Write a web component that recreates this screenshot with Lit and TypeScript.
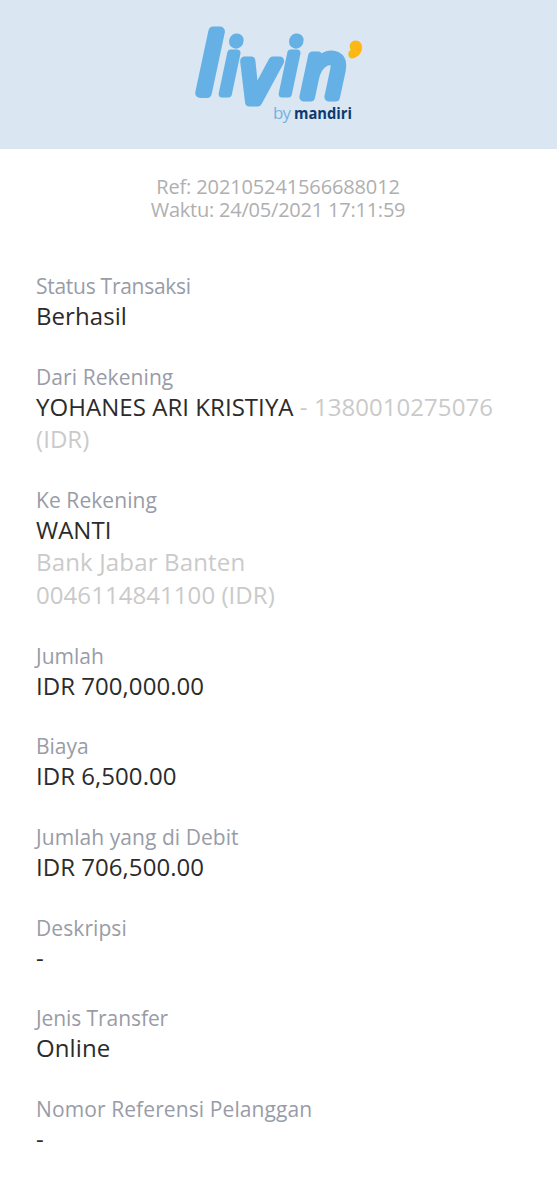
import { LitElement, html, css } from "lit";
import { customElement } from "lit/decorators.js";
import { styleMap } from "lit/directives/style-map.js";

interface Line { text?: string; muted?: string; spacing?: number }
interface Row { label: string; spacing?: number; lines: Line[] }

const rows: Row[] = [
  { label: "Status Transaksi", spacing: -0.27, lines: [{ text: "Berhasil", spacing: 0.06 }] },
  { label: "Dari Rekening", spacing: 0.08, lines: [{ text: "YOHANES ARI KRISTIYA", muted: " - 1380010275076 (IDR)", spacing: 0.05 }] },
  { label: "Ke Rekening", spacing: 0.08, lines: [{ text: "WANTI" }, { muted: "Bank Jabar Banten", spacing: 0.16 }, { muted: "0046114841100 (IDR)", spacing: 0.06 }] },
  { label: "Jumlah", lines: [{ text: "IDR 700,000.00", spacing: 0.04 }] },
  { label: "Biaya", lines: [{ text: "IDR 6,500.00", spacing: 0.04 }] },
  { label: "Jumlah yang di Debit", spacing: 0.06, lines: [{ text: "IDR 706,500.00", spacing: 0.04 }] },
  { label: "Deskripsi", spacing: 0.08, lines: [{ text: "-" }] },
  { label: "Jenis Transfer", spacing: -0.08, lines: [{ text: "Online", spacing: 0.1 }] },
  { label: "Nomor Referensi Pelanggan", spacing: 0.1, lines: [{ text: "-" }] },
];

const tracking = (px = 0) => styleMap({ letterSpacing: `${px}px` });

@customElement("app-root")
export class AppRoot extends LitElement {
  static styles = css`
    :host { display: block; min-height: 1200px; background: #fff; font-family: "Open Sans", "Noto Sans", sans-serif; }
    .banner { height: 149px; background: #dae7f2; display: flex; justify-content: center; }
    .logo { display: block; width: 557px; height: 149px; }
    .script { font-family: "Open Sans", sans-serif; font-style: italic; font-weight: 400; font-size: 76px; fill: #65b1e6; stroke: #65b1e6; stroke-width: 7; stroke-linejoin: round; stroke-linecap: round; }
    .ascender { font-size: 81px; stroke-width: 10; }
    .wide { font-size: 76px; stroke-width: 9; }
    .tick { font-family: "Liberation Serif", serif; font-style: italic; font-weight: 400; font-size: 42px; fill: #fdb813; stroke: #fdb813; stroke-width: 7; stroke-linejoin: round; }
    .by { font: 400 17px "Open Sans", sans-serif; fill: #75b2e1; }
    .brand { font: 700 16.5px "Open Sans", sans-serif; fill: #0c3a70; }
    .meta { padding: 25.5px 1px 0 0; text-align: center; font-size: 20px; line-height: 23.5px; color: #afafaf; }
    .ref { letter-spacing: -0.13px; }
    .time { letter-spacing: -0.22px; }
    .list { padding: 50.5px 36px 0; display: flex; flex-direction: column; gap: 30.2px; }
    .label { font-size: 21px; line-height: 28px; color: #989ca7; }
    .value { font-size: 24px; line-height: 32.5px; color: #2b2b2b; }
    .muted { color: #cacaca; }
  `;

  render() {
    return html`
      <header class="banner">
        <svg class="logo" viewBox="0 0 557 149" role="img" aria-label="livin' by mandiri">
          <text class="script"><tspan class="ascender" x="198" y="93">l</tspan><tspan x="220" y="94">i</tspan><tspan class="wide" x="241" y="102">v</tspan><tspan x="280" y="94">i</tspan><tspan class="wide" x="302" y="97">n</tspan></text>
          <text class="tick" x="346" y="72">’</text>
          <text class="by" x="273" y="119" textLength="18">by</text>
          <text class="brand" x="294" y="119" textLength="58" lengthAdjust="spacingAndGlyphs">mandiri</text>
        </svg>
      </header>
      <div class="meta">
        <div class="ref">Ref: 202105241566688012</div>
        <div class="time">Waktu: 24/05/2021 17:11:59</div>
      </div>
      <main class="list">
        ${rows.map((row) => html`
          <section>
            <div class="label" style=${tracking(row.spacing)}>${row.label}</div>
            ${row.lines.map((l) => html`<div class="value" style=${tracking(l.spacing)}>${l.text ?? ""}${l.muted ? html`<span class="muted">${l.muted}</span>` : ""}</div>`)}
          </section>`)}
      </main>`;
  }
}
